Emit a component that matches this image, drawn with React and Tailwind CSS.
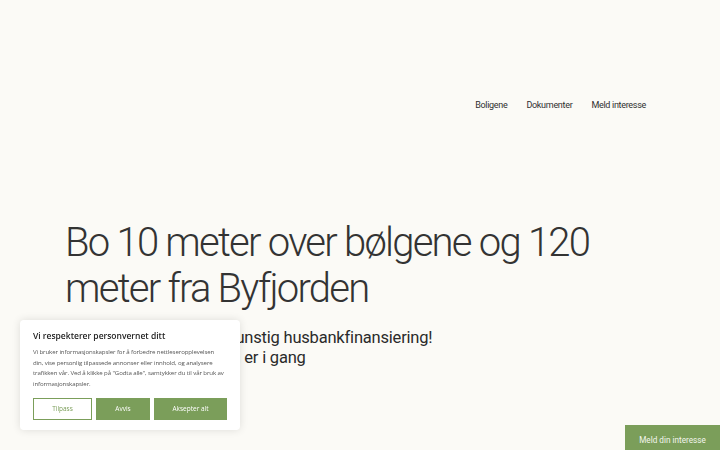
export default function App() {
  return (
    <div className="relative min-h-[450px] w-full bg-[#fbfaf6] text-[#2f2f2f]" style={{ fontFamily: "Roboto, 'Liberation Sans', sans-serif" }}>
      <header className="flex justify-end pt-[99px] pr-[74px]">
        <nav className="flex gap-[19px] text-[9px] tracking-[-0.3px] text-[#2f2f2f]">
          <a>Boligene</a>
          <a>Dokumenter</a>
          <a>Meld interesse</a>
        </nav>
      </header>
      <main className="pl-[65px] pt-[107px]">
        <h1 className="text-[40px] leading-[46px] font-light tracking-[-1.75px] text-[#333]">
          Bo 10 meter over bølgene og 120<br />meter fra Byfjorden
        </h1>
        <p className="mt-[16px] text-[16.5px] leading-[20px] tracking-[-0.2px] text-[#2a2a2a]">
          Alle leiligheter nå med gunstig husbankfinansiering!<br />Salget av nytt byggetrinn er i gang
        </p>
      </main>

      <div className="fixed left-[20px] top-[320px] w-[220px] rounded-[4px] bg-white pl-[13px] pr-[9px] pt-[10px] pb-[10px] shadow-[0_0_8px_rgba(0,0,0,0.12)]" style={{ fontFamily: "'Open Sans', sans-serif" }}>
        <div className="text-[8.5px] font-semibold text-[#222]">Vi respekterer personvernet ditt</div>
        <p className="mt-[4px] whitespace-nowrap text-[6.1px] leading-[10.8px] tracking-[-0.1px] text-[#555]">
          Vi bruker informasjonskapsler for å forbedre nettleseropplevelsen<br />
          din, vise personlig tilpassede annonser eller innhold, og analysere<br />
          trafikken vår. Ved å klikke på "Godta alle", samtykker du til vår bruk av<br />
          informasjonskapsler.
        </p>
        <div className="mt-[8px] flex gap-[4px]">
          <button className="h-[22px] w-[59px] border-[1.5px] border-[#7b9e5a] bg-white text-[6.5px] text-[#7b9e5a]">Tilpass</button>
          <button className="h-[22px] w-[54px] border-[1.5px] border-[#7b9e5a] bg-[#7b9e5a] text-[6.5px] text-white">Avvis</button>
          <button className="h-[22px] w-[73px] border-[1.5px] border-[#7b9e5a] bg-[#7b9e5a] text-[6.5px] text-white">Aksepter alt</button>
        </div>
      </div>

      <button className="fixed right-0 top-[425px] flex h-[30px] w-[95px] items-start justify-center bg-[#7b9e5a] pt-[9px] text-[8.2px] text-[#f3f6ee]">
        Meld din interesse
      </button>
    </div>
  );
}
